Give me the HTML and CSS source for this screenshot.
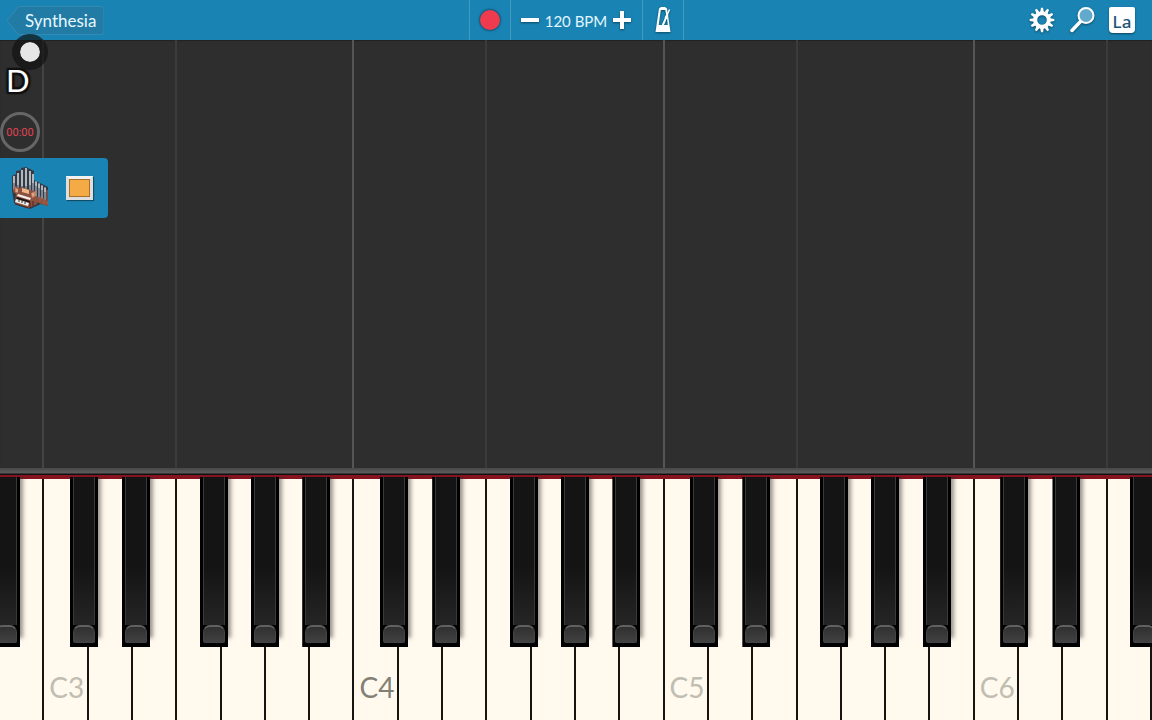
FILE: index.html
```html
<!DOCTYPE html>
<html lang="en">
<head>
  <meta charset="UTF-8">
  <title>Synthesia</title>
  <link rel="stylesheet" href="styles.css">
</head>
<body>
  <header class="topbar">
    <a class="back" href="#">
      <svg class="back-shape" viewBox="0 0 98 28" preserveAspectRatio="none" aria-hidden="true">
        <path d="M1 14 L11 2 Q12 .5 14 .5 H94 Q97.500 .5 97.500 4 V24 Q97.500 27.500 94 27.500 H14 Q12 27.500 11 26 Z"/>
      </svg>
      <span>Synthesia</span>
    </a>
    <div class="transport">
      <button class="tool" aria-label="Record"><span class="rec"></span></button>
      <div class="tempo">
        <button class="step" aria-label="Slower">
          <svg width="20" height="20" viewBox="0 0 20 20"><path d="M1 8h18v4H1z" fill="#fff"/></svg>
        </button>
        <span class="bpm">120 BPM</span>
        <button class="step" aria-label="Faster">
          <svg width="20" height="20" viewBox="0 0 20 20"><path d="M8 1h4v7h7v4h-7v7H8v-7H1V8h7z" fill="#fff"/></svg>
        </button>
      </div>
      <button class="tool" aria-label="Metronome">
        <svg width="18" height="28" viewBox="0 0 18 28">
          <path fill="#fff" fill-rule="evenodd" d="M5 2.500 L7 1 H11 L13 2.500 L16.500 26 H1.500 Z M6.800 4 L4.700 19 H8 L12.300 9 L11.200 4 Z M13 12 L10 19 H13.800 Z"/>
          <path d="M8.500 19.500 L15.500 3.500" stroke="#fff" stroke-width="1.500"/>
          <path d="M10.500 12 L12.500 8 L14.500 9 L12.500 13 Z" fill="#fff"/>
        </svg>
      </button>
    </div>
    <div class="tools">
      <button class="tool-icon" aria-label="Settings">
        <svg width="28" height="28" viewBox="-14 -14 28 28">
          <circle r="6.800" fill="none" stroke="#fff" stroke-width="4"/>
          <g id="teeth" fill="#fff"></g>
        </svg>
      </button>
      <button class="tool-icon" aria-label="Zoom">
        <svg width="28" height="28" viewBox="0 0 28 28">
          <path d="M4 24.500 L13 15" stroke="#fff" stroke-width="3.500" stroke-linecap="round"/>
          <circle cx="18" cy="9.500" r="7.500" fill="#62a9cd" stroke="#fff" stroke-width="2"/>
        </svg>
      </button>
      <button class="tool-icon" aria-label="Note labels"><span class="la">La</span></button>
    </div>
  </header>

  <main class="roll">
    <div class="lanes" id="lanes"></div>
    <div class="hud">
      <div class="note-name">D</div>
      <div class="timer">00:00</div>
      <div class="track">
        <button class="track-btn" aria-label="Instrument">
          <svg width="40" height="44" viewBox="0 0 40 44">
            <path d="M2 10 L6 8 V5 L11 4 V2 L16 1 L20 3 L24 5 V14 L38 21 V40 L31 38 L20 43 L4 37 L2 24 Z" fill="#343a44"/>
            <g stroke="#7f8892" stroke-width="2">
              <path d="M4 10V24M8 7V25M12 4V24M16 2V24M20 5V26M23 8V29"/>
              <path d="M26 15V33M29 17V35M32 19V37M35 21V38"/>
            </g>
            <g stroke="#e2e7eb" stroke-width="1">
              <path d="M4 10V17M8 7V19M12 4V20M16 2V20M20 5V19M23 8V17M26 16V20M29 18V22M32 20V24M35 22V26"/>
            </g>
            <path d="M24 29 L28 31 L38 35 V40 L34 39 L26 36 Z" fill="#8d513f"/>
            <path d="M30 30V36M34 32V38M37 24V38" stroke="#a8634d"/>
            <path d="M5 20 L9 22 L12 21 L20 24 L25 25 L27 38 L19 42 L5 37 L6 28 L3 26 Z" fill="#8d513f"/>
            <path d="M12 22 L19 24 V28 L12 26 Z" fill="#edb58a"/>
            <path d="M5 21 L8 23 V27 L5 26 Z M21 27 L26 25 V30 L22 32 Z" fill="#c98367"/>
            <path d="M7 23V26M23 27V30" stroke="#f0c5a5"/>
            <path d="M8 28 L21 32 L20 34 L7 30 Z" fill="#f4f1ed"/>
            <path d="M7 31 L20 35 V37 L6 33 Z" fill="#1b1616"/>
            <path d="M6 33 L19 37 L18 40 L5 36 Z" fill="#eee"/>
            <path d="M9 34V36M12 35V37M15 36V38" stroke="#2a2424"/>
            <path d="M5 38 L18 42 M20 36V42M23 35V40" stroke="#4b251c"/>
          </svg>
        </button>
        <button class="track-btn" aria-label="Track colour"><span class="swatch"></span></button>
      </div>
    </div>
    <div class="pointer"></div>
  </main>

  <div class="rail"></div>
  <div class="keyboard" id="keyboard"></div>

  <script>
    const names = ['C', 'D', 'E', 'F', 'G', 'A', 'B'];
    const keyboard = document.getElementById('keyboard');
    const lanes = document.getElementById('lanes');

    // 26 white keys, starting from B2
    for (let i = 0; i < 26; i++) {
      const name = names[(i + 6) % 7];
      const octave = 2 + Math.floor((i + 6) / 7);

      const lane = document.createElement('div');
      lane.className = 'lane lane-' + name.toLowerCase();
      lanes.appendChild(lane);

      const key = document.createElement('button');
      key.className = 'key key-' + name.toLowerCase();
      key.setAttribute('aria-label', name + octave);
      let html = '';
      if (name === 'C') {
        html += `<span class="label${octave === 4 ? ' middle' : ''}">C${octave}</span>`;
      }
      if ('CDFGA'.includes(name) || i === 0) {
        html += '<span class="black"><span class="black-top"></span><span class="black-front"></span></span>';
      }
      key.innerHTML = html;
      keyboard.appendChild(key);
    }

    // gear teeth
    let teeth = '';
    for (let a = 0; a < 360; a += 30) {
      teeth += `<path d="M-1.800 -8 L-1 -12.300 H1 L1.800 -8 Z" transform="rotate(${a})"/>`;
    }
    document.getElementById('teeth').innerHTML = teeth;
  </script>
</body>
</html>
```
FILE: styles.css
```css
* {
  box-sizing: border-box;
}
body {
  margin: 0;
  height: 100vh;
  display: flex;
  flex-direction: column;
  overflow: hidden;
  background: #2e2e2e;
  font-family: Lato, "Noto Sans", sans-serif;
}
button {
  border: none;
  padding: 0;
  background: none;
  font: inherit;
  cursor: pointer;
}

/* top bar */
.topbar {
  flex: none;
  height: 40px;
  display: grid;
  grid-template-columns: 1fr auto 1fr;
  align-items: center;
  background: #1984b3;
  color: #fff;
}
.back {
  position: relative;
  justify-self: start;
  margin-left: 6px;
  padding: 1px 8px 0 19px;
  line-height: 28px;
  font-size: 17px;
  color: #e8f8ff;
  text-decoration: none;
}
.back span {
  position: relative;
}
.back-shape {
  position: absolute;
  left: 0;
  top: 0;
  width: 100%;
  height: 100%;
  fill: #227ba5;
  stroke: #3289b1;
}
.transport {
  display: flex;
  height: 40px;
  border-left: 1px solid #439abf;
}
.tool, .tempo {
  display: flex;
  align-items: center;
  justify-content: center;
  border-right: 1px solid #439abf;
}
.tool {
  width: 41px;
}
.tempo {
  width: 132px;
  gap: 5px;
}
.tool svg, .step svg, .tool-icon svg {
  display: block;
  filter: drop-shadow(0 1px 1px rgba(0,0,0,0.45));
}
.rec {
  width: 20px;
  height: 20px;
  border-radius: 50%;
  background: #f03a4d;
  box-shadow: 0 0 2px 1px rgba(20,50,80,0.6);
}
.bpm {
  font-size: 15px;
  line-height: 20px;
  padding-top: 2px;
  color: #e2f6ff;
  white-space: nowrap;
}
.tools {
  justify-self: end;
  display: flex;
  padding-right: 10px;
}
.tool-icon {
  width: 40px;
  height: 40px;
  display: flex;
  align-items: center;
  justify-content: center;
}
.la {
  width: 26px;
  height: 26px;
  border-radius: 2px 2px 4px 4px;
  background: #fff;
  box-shadow: 0 1px 2px rgba(0,0,0,0.5);
  font: 500 17px/29px "Noto Sans", sans-serif;
  color: #1d5575;
}

/* falling notes area */
.roll {
  position: relative;
  flex: 1;
  min-height: 0;
  box-shadow: inset 0 1px 1px #222;
}
.lanes {
  position: absolute;
  inset: 0;
  display: grid;
  grid-template-columns: repeat(26, 1fr);
}
.lane-b {
  border-right: 2px solid #555;
}
.lane-b:first-child {
  border-right-color: #444;
}
.lane-e {
  border-right: 2px solid #3b3b3b;
}
.hud {
  position: relative;
  display: flex;
  flex-direction: column;
  align-items: flex-start;
  padding-top: 20px;
}
.note-name {
  padding-left: 6px;
  height: 40px;
  font-size: 31px;
  line-height: 40px;
  color: #fff;
  text-shadow: 2px 0 1px #111, -2px 0 1px #111, 0 2px 1px #111, 0 -2px 1px #111, 2px 2px 1px #111, -2px -2px 1px #111, 2px -2px 1px #111, -2px 2px 1px #111;
}
.timer {
  width: 40px;
  height: 40px;
  margin: 12px 0 6px;
  border: 3px solid #666;
  border-radius: 50%;
  display: flex;
  align-items: center;
  justify-content: center;
  font-family: Roboto, sans-serif;
  font-size: 11px;
  color: #e04455;
}
.track {
  height: 60px;
  display: flex;
  align-items: center;
  gap: 16px;
  padding: 0 15px 0 10px;
  border-radius: 0 4px 4px 0;
  background: #1984b3;
}
.track-btn svg, .swatch {
  display: block;
}
.swatch {
  width: 27px;
  height: 24px;
  border: 3px solid #dedede;
  border-top-color: #f2f2f2;
  background: #f4ab45;
  box-shadow: inset 0 0 0 1px #a66f2c, 1px 1px 1px rgba(0,0,0,0.4);
}
.pointer {
  position: absolute;
  left: 12px;
  top: -6px;
  width: 36px;
  height: 36px;
  border: 8px solid rgba(18,18,18,0.7);
  border-radius: 50%;
  background: #e6e6e6;
  background-clip: padding-box;
}

/* piano */
.rail {
  flex: none;
  height: 7px;
  background: linear-gradient(#484848, #5c5c5c 5px, #111 6px);
}
.keyboard {
  position: relative;
  flex: none;
  height: 245px;
  display: grid;
  grid-template-columns: repeat(26, 1fr);
  border-top: 4px solid #851420;
}
.key {
  position: relative;
  display: flex;
  align-items: flex-end;
  border-right: 2px solid #17150f;
  background: #fff9ee;
  cursor: pointer;
}
.label {
  padding: 0 0 15px 5px;
  font-size: 28px;
  line-height: 36px;
  color: #c0bdb1;
}
.label.middle {
  color: #827f74;
}
.black {
  position: absolute;
  z-index: 1;
  top: -2px;
  width: 28px;
  height: 170px;
  padding: 0 3px 4px;
  display: flex;
  flex-direction: column;
  background: #000;
  box-shadow: 4px -8px 4px -1px rgba(60,50,45,0.5);
  clip-path: inset(0 -10px 0 0);
}
.black-top {
  flex: 1;
  border: solid #3a3a38;
  border-width: 0 1px;
  background: linear-gradient(#141414 60%, #252525);
}
.black-front {
  height: 18px;
  border: 1px solid #444;
  border-top: 2px solid #606060;
  border-radius: 7px 7px 2px 2px;
  background: linear-gradient(#303030, #414141);
}
.key-c .black {
  left: 60%;
}
.key-d .black {
  left: 79%;
}
.key-f .black {
  left: 53%;
}
.key-g .black {
  left: 69%;
}
.key-a .black {
  left: 86%;
}
.key-b .black {
  left: -18%;
}
```
